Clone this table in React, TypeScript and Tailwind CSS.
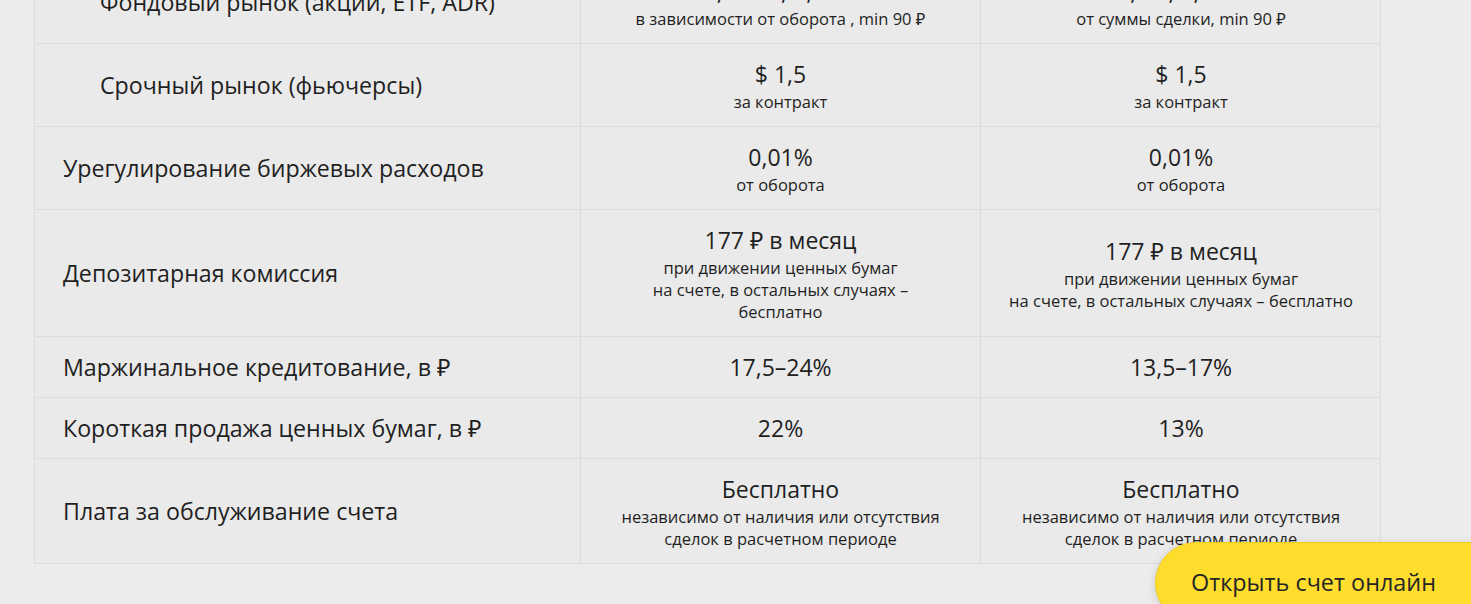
interface Cell {
  main: string;
  sub?: string[];
}

interface Row {
  label: string;
  indent?: boolean;
  investor: Cell;
  trader: Cell;
}

const rows: Row[] = [
  {
    label: "Фондовый рынок (акций, ETF, ADR)",
    indent: true,
    investor: { main: "0,025%, 0,05%", sub: ["в зависимости от оборота , min 90 ₽"] },
    trader: { main: "0,3%, 0,05%", sub: ["от суммы сделки, min 90 ₽"] },
  },
  {
    label: "Срочный рынок (фьючерсы)",
    indent: true,
    investor: { main: "$ 1,5", sub: ["за контракт"] },
    trader: { main: "$ 1,5", sub: ["за контракт"] },
  },
  {
    label: "Урегулирование биржевых расходов",
    investor: { main: "0,01%", sub: ["от оборота"] },
    trader: { main: "0,01%", sub: ["от оборота"] },
  },
  {
    label: "Депозитарная комиссия",
    investor: {
      main: "177 ₽ в месяц",
      sub: ["при движении ценных бумаг", "на счете, в остальных случаях –", "бесплатно"],
    },
    trader: {
      main: "177 ₽ в месяц",
      sub: ["при движении ценных бумаг", "на счете, в остальных случаях – бесплатно"],
    },
  },
  {
    label: "Маржинальное кредитование, в ₽",
    investor: { main: "17,5–24%" },
    trader: { main: "13,5–17%" },
  },
  {
    label: "Короткая продажа ценных бумаг, в ₽",
    investor: { main: "22%" },
    trader: { main: "13%" },
  },
  {
    label: "Плата за обслуживание счета",
    investor: {
      main: "Бесплатно",
      sub: ["независимо от наличия или отсутствия", "сделок в расчетном периоде"],
    },
    trader: {
      main: "Бесплатно",
      sub: ["независимо от наличия или отсутствия", "сделок в расчетном периоде"],
    },
  },
];

function ValueCell({ cell, last }: { cell: Cell; last?: boolean }) {
  const hasSub = !!cell.sub;
  return (
    <div
      className={
        "flex flex-col items-center justify-center text-center " +
        (hasSub ? "pt-4 pb-[13px] " : "py-4 ") +
        (last ? "" : "border-r border-[#dcdcdc]")
      }
    >
      <div className={"text-[23px] leading-[28px] " + (hasSub ? "mb-[3px]" : "")}>{cell.main}</div>
      {cell.sub?.map((line) => (
        <div key={line} className="text-[16.5px] leading-[22px]">
          {line}
        </div>
      ))}
    </div>
  );
}

export default function App() {
  return (
    <div
      className="relative h-[604px] overflow-hidden bg-[#ececec] text-[#1f1f1f]"
      style={{ fontFamily: '"Open Sans", "Noto Sans", sans-serif' }}
    >
      {/* tariff table, page scrolled so first row is cut */}
      <div className="-mt-[39px] ml-[34px] w-[1347px] border-x border-b border-[#dcdcdc] bg-[#eaeaea]">
        {rows.map((row) => (
          <div
            key={row.label}
            className="grid grid-cols-[546px_400px_400px] border-b border-[#dcdcdc] last:border-b-0"
          >
            <div
              className={
                "flex items-center border-r border-[#dcdcdc] text-[23.2px] leading-[28px] " +
                (row.indent ? "pl-[65px]" : "pl-[28px]")
              }
            >
              {row.label}
            </div>
            <ValueCell cell={row.investor} />
            <ValueCell cell={row.trader} last />
          </div>
        ))}
      </div>

      {/* floating CTA */}
      <button className="absolute left-[1155px] top-[542px] h-[82px] w-[360px] rounded-full border border-[#f2cc1d] bg-[#ffdd2d] pl-[35px] text-left text-[23.4px] text-[#262626] shadow-[0_2px_8px_rgba(0,0,0,0.15)]">
        Открыть счет онлайн
      </button>
    </div>
  );
}
